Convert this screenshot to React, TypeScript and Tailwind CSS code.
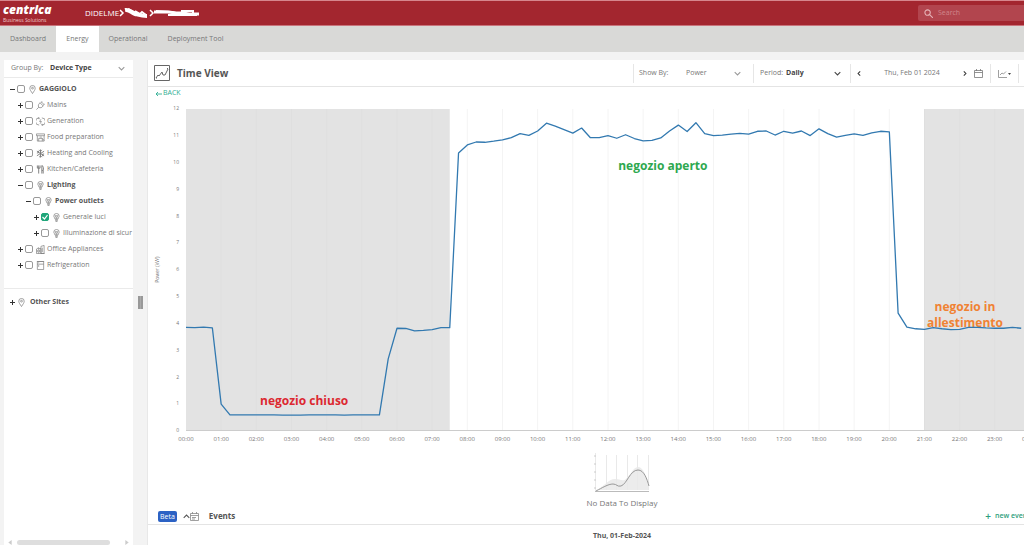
import { useState } from 'react';
import type { ReactNode } from 'react';

// kW, one reading every 15 minutes
const readings = [
  3.86, 3.85, 3.87, 3.84, 1.0, 0.6, 0.6, 0.6, 0.6, 0.6, 0.6, 0.59, 0.59, 0.59, 0.6, 0.6,
  0.6, 0.6, 0.59, 0.6, 0.6, 0.6, 0.6, 2.69, 3.83, 3.82, 3.73, 3.75, 3.78, 3.85, 3.85, 10.36,
  10.66, 10.77, 10.76, 10.8, 10.85, 10.93, 11.08, 11.02, 11.18, 11.47, 11.36, 11.23, 11.1, 11.29, 10.93, 10.93,
  11.01, 10.91, 11.04, 10.9, 10.81, 10.83, 10.92, 11.18, 11.4, 11.16, 11.49, 11.08, 11.01, 11.03, 11.06, 11.09,
  11.06, 11.17, 11.18, 11.03, 11.17, 11.1, 11.18, 11.01, 11.26, 11.08, 10.95, 11.02, 11.07, 11.02, 11.11, 11.17,
  11.15, 4.39, 3.87, 3.81, 3.79, 3.85, 3.81, 3.78, 3.79, 3.86, 3.86, 3.84, 3.83, 3.83, 3.86, 3.83,
];

const yTicks = [12, 11, 10, 9, 8, 7, 6, 5, 4, 3, 2, 1, 0];
const hours = Array.from({ length: 25 }, (_, i) => i);

type IconName = 'pin' | 'plug' | 'generation' | 'food' | 'snow' | 'kitchen' | 'bulb' | 'office' | 'fridge';

const iconShapes: Record<IconName, ReactNode> = {
  pin: (
    <>
      <path d="M10 19C7 14 4 11 4 7a6 6 0 0 1 12 0c0 4-3 7-6 12z" />
      <circle cx="10" cy="7" r="2" />
    </>
  ),
  plug: <path d="M1 19l5-5M6 14c-2-4 0-8 3-10l7 7c-3 4-6 5-10 3zM10 4l4-3M15 10l4-3M12 2l6 6" />,
  generation: (
    <>
      <path d="M7 2A8 8 0 0 0 7 18M13 2A8 8 0 0 1 13 18M4 2h3v3M16 18h-3v-3" />
      <path d="M11 5l-3 5h4l-3 5" />
    </>
  ),
  food: <path d="M1 2h18M1 2v4h18V2M3 6v12h15V6M6 18v-6h8v6M8 9h5M14 12l4 5" />,
  snow: <path strokeWidth="2" d="M10 1v18M2 5l16 10M18 5L2 15M7 2l3 3 3-3M7 18l3-3 3 3M2 9l4-1-1-4M18 11l-4 1 1 4" />,
  kitchen: <path strokeWidth="2" d="M3 1v6h6V1M6 1v18M13 19V1c4 1 4 8 3 11h-3M16 12v7" />,
  bulb: (
    <>
      <path d="M7 14c0-3-3-4-3-7a6 6 0 0 1 12 0c0 3-3 4-3 7zM7 17h6M8 19h4" />
      <path d="M7 6l2 3v5M13 6l-2 3v5M7 6h6" />
    </>
  ),
  office: <path d="M1 19V9l5-3v13M6 8h5v11M11 19V3l7-2v18zM3 11v5M8 11v5M14 6v10M1 19h18" />,
  fridge: <path d="M3 1h14v18H3zM3 7h14M6 3v2M6 9v4M2 1h16" />,
};

function Icon({ name }: { name: IconName }) {
  return (
    <svg viewBox="0 0 20 20" className="h-[9px] w-[9px] shrink-0" fill="none" stroke="#777" strokeWidth="1.5">
      {iconShapes[name]}
    </svg>
  );
}

function Chevron({ className = '', d = 'M1 3l4 4 4-4' }: { className?: string; d?: string }) {
  return (
    <svg viewBox="0 0 10 10" className={'pointer-events-none h-[7px] w-[7px] shrink-0 ' + className} fill="none" stroke="currentColor" strokeWidth="1.5">
      <path d={d} />
    </svg>
  );
}

interface Item {
  label: string;
  icon: IconName;
  level: number;
  open?: boolean;
  checked?: boolean;
}

const tree: Item[] = [
  { label: 'GAGGIOLO', icon: 'pin', level: 0, open: true },
  { label: 'Mains', icon: 'plug', level: 1 },
  { label: 'Generation', icon: 'generation', level: 1 },
  { label: 'Food preparation', icon: 'food', level: 1 },
  { label: 'Heating and Cooling', icon: 'snow', level: 1 },
  { label: 'Kitchen/Cafeteria', icon: 'kitchen', level: 1 },
  { label: 'Lighting', icon: 'bulb', level: 1, open: true },
  { label: 'Power outlets', icon: 'bulb', level: 2, open: true },
  { label: 'Generale luci', icon: 'bulb', level: 3, checked: true },
  { label: 'Illuminazione di sicur', icon: 'bulb', level: 3 },
  { label: 'Office Appliances', icon: 'office', level: 1 },
  { label: 'Refrigeration', icon: 'fridge', level: 1 },
];

const indents = ['pl-[5px]', 'pl-[13px]', 'pl-[21px]', 'pl-[29px]'];

function Toggle({ open, label }: { open?: boolean; label: string }) {
  return (
    <button type="button" aria-label={'Toggle ' + label} className="flex w-2 shrink-0 text-[#333]">
      <svg viewBox="0 0 6 6" className="ml-px h-[5px] w-[5px]" stroke="currentColor" strokeWidth="1.2">
        <path d={open ? 'M0 3h6' : 'M0 3h6M3 0v6'} />
      </svg>
    </button>
  );
}

function TreeRow({ item }: { item: Item }) {
  const [checked, setChecked] = useState(!!item.checked);

  return (
    <li className={'flex h-4 items-center ' + indents[item.level]}>
      <Toggle open={item.open} label={item.label} />
      <label className="flex items-center whitespace-nowrap">
        <span className="grid shrink-0">
          <input
            type="checkbox"
            checked={checked}
            onChange={() => setChecked(!checked)}
            className="col-start-1 row-start-1 h-2 w-2 appearance-none rounded-[2px] border border-[#999] bg-white checked:border-[#1fa67a] checked:bg-[#1fa67a]"
          />
          {checked && (
            <svg viewBox="0 0 8 8" className="pointer-events-none col-start-1 row-start-1 h-2 w-2" fill="none" stroke="#fff" strokeWidth="1.2">
              <path d="M1.500 4l2 2 3-4" />
            </svg>
          )}
        </span>
        <span className="flex w-[14px] justify-center">
          <Icon name={item.icon} />
        </span>
        <span className={item.open ? 'font-bold text-[#555]' : 'text-[#777]'}>{item.label}</span>
      </label>
    </li>
  );
}

function Sidebar() {
  return (
    <aside className="flex w-[129px] shrink-0 flex-col overflow-hidden bg-white text-[7px]">
      <div className="flex h-[18px] items-center border-b border-[#eaeaea] pr-2 pl-[7px]">
        <label htmlFor="group" className="w-[39px] text-[#777]">Group By:</label>
        <select id="group" className="min-w-0 flex-1 appearance-none font-bold text-[#444] outline-none">
          <option>Device Type</option>
        </select>
        <Chevron className="text-[#999]" />
      </div>
      <ul className="flex flex-col pt-[3px]">
        {tree.map((item) => (
          <TreeRow key={item.label} item={item} />
        ))}
      </ul>
      <div className="mt-[15px] flex h-7 items-center border-t border-[#eaeaea] pl-[5px]">
        <Toggle label="Other Sites" />
        <span className="flex w-[13px] items-center"><Icon name="pin" /></span>
        <span className="font-bold text-[#555]">Other Sites</span>
      </div>
      <div className="mt-auto flex h-[5px] items-center justify-between px-1 text-[#ccc]">
        <svg viewBox="0 0 4 6" className="h-[5px] w-1" fill="currentColor"><path d="M4 0v6L0 3z" /></svg>
        <div className="mr-[15px] ml-[5px] h-[5px] flex-1 rounded-full bg-[#dedede]" />
        <svg viewBox="0 0 4 6" className="h-[5px] w-1" fill="currentColor"><path d="M0 0v6l4-3z" /></svg>
      </div>
    </aside>
  );
}

function Header() {
  return (
    <header className="flex h-[26px] shrink-0 items-center border-t border-b border-t-[#d6868d] border-b-[#c9747c] bg-[#a3262f] text-white">
      <div className="w-[85px] pl-[3px]">
        <div className="text-[12px] leading-[14px] font-extrabold italic">centrica</div>
        <div className="text-[5px] leading-[7px] whitespace-nowrap text-[#f0c8cb]">Business Solutions</div>
      </div>
      <nav aria-label="Site" className="flex items-center text-[8px]">
        <a href="#didelme" className="w-[33px]">DIDELME</a>
        <svg viewBox="0 0 82 14" className="h-[14px] w-[82px]" fill="none" stroke="#fff">
          <path strokeWidth="1.5" d="M2 4l3 3-3 3M32 4l3 3-3 3" />
          <path strokeWidth="4" strokeLinejoin="round" d="M7 4c5-1 6 3 10 4s7 2 12 2" />
          <path strokeWidth="2" d="M10 3l8 4M17 5l5 3 2-2 4 3" />
          <path strokeWidth="3" d="M36 6h14l8 1h7l6 1h10" />
          <path strokeWidth="2" d="M38 5l16 1 8 2h18M63 5h12v4M50 9h29" />
        </svg>
      </nav>
      <label className="ml-auto flex h-4 w-[106px] items-center gap-[5px] rounded-l-[2px] bg-[#b2454e] pl-[6px]">
        <svg viewBox="0 0 10 10" className="h-[9px] w-[9px] shrink-0" fill="none" stroke="#e6b3b7" strokeWidth="1.2">
          <circle cx="4" cy="4" r="3" />
          <path d="M6 6l4 4" />
        </svg>
        <input type="search" aria-label="Search" placeholder="Search" className="w-full min-w-0 text-[7px] outline-none placeholder:text-[#d0868c]" />
      </label>
    </header>
  );
}

function Tabs() {
  return (
    <nav aria-label="Sections" className="flex h-[26px] shrink-0 bg-[#d9d9d7] text-[7px] text-[#777]">
      <a href="#dashboard" className="flex w-14 items-center justify-center">Dashboard</a>
      <a href="#energy" className="flex w-[43px] items-center justify-center bg-white">Energy</a>
      <a href="#operational" className="flex w-[58px] items-center justify-center">Operational</a>
      <a href="#deployment" className="flex w-[77px] items-center justify-center">Deployment Tool</a>
    </nav>
  );
}

function Toolbar() {
  return (
    <div className="flex h-[27px] shrink-0 items-center border-b border-[#e4e4e4] pl-[6px] text-[7px] text-[#777]">
      <svg viewBox="0 0 16 16" className="h-4 w-4" fill="none" stroke="#666">
        <path d="M.5.5h15v15H.5z" />
        <path d="M2 13l2-3 1 1 3-4 1 3 2 0 3-6M2 13h1M13 3l1 1" />
      </svg>
      <h1 className="ml-[7px] text-[10px] font-bold text-[#555]">Time View</h1>
      <div className="ml-auto flex h-[19px] w-[120px] items-center border-l border-[#e6e6e6] pr-3 pl-[5px]">
        <label htmlFor="show" className="w-[47px]">Show By:</label>
        <select id="show" className="min-w-0 flex-1 appearance-none outline-none">
          <option>Power</option>
        </select>
        <Chevron className="text-[#999]" />
      </div>
      <div className="flex h-[19px] w-[97px] items-center border-l border-[#e6e6e6] pr-[9px] pl-[6px]">
        <label htmlFor="period" className="w-[26px]">Period:</label>
        <select id="period" className="min-w-0 flex-1 appearance-none font-bold text-[#444] outline-none">
          <option>Daily</option>
        </select>
        <Chevron className="text-[#444]" />
      </div>
      <div className="flex h-[19px] w-[140px] items-center border-l border-[#e6e6e6] pr-[7px] pl-[5px]">
        <button type="button" aria-label="Previous day"><Chevron className="text-[#333]" d="M6 2L3 5l3 3" /></button>
        <span className="flex-1 text-center">Thu, Feb 01 2024</span>
        <button type="button" aria-label="Next day"><Chevron className="text-[#333]" d="M4 2l3 3-3 3" /></button>
        <button type="button" aria-label="Pick a date" className="ml-[6px]">
          <svg viewBox="0 0 9 9" className="h-[9px] w-[9px]" fill="none" stroke="#777" strokeWidth=".8">
            <path d="M.5 1.500h8v7h-8zM.5 3.500h8M2.500 0v2M6.500 0v2" />
          </svg>
        </button>
      </div>
      <div className="flex h-[19px] w-[34px] items-center border-l border-[#e6e6e6] pl-[7px]">
        <button type="button" aria-label="Chart type" className="flex items-center">
          <svg viewBox="0 0 14 9" className="h-[9px] w-[14px]" fill="none" stroke="#888" strokeWidth=".8">
            <path d="M.5 1v7.500H9M2 6l2-2 1.500 1L8 2.500" />
            <path d="M10 4h3l-1.500 2z" fill="#444" stroke="none" />
          </svg>
        </button>
        <span className="ml-[6px] h-[19px] border-l border-[#e6e6e6]" />
      </div>
    </div>
  );
}

const noteClass = 'absolute -translate-x-1/2 text-center text-[12px] leading-4 font-bold whitespace-nowrap ';

function PowerChart() {
  const points = readings.map((kw, i) => `${i},${12 - kw}`).join(' ');

  return (
    <div className="flex text-[6px] text-[#777]">
      <div className="flex h-[322px] w-5 items-center justify-center">
        <span className="-rotate-90 text-[5px] whitespace-nowrap">Power (kW)</span>
      </div>
      <div className="flex h-[322px] w-[11px] flex-col justify-between text-[5px]">
        {yTicks.map((t) => (
          <span key={t} className="flex h-0 items-center justify-end">{t}</span>
        ))}
      </div>
      {/* the last hour runs under the right edge */}
      <div className="relative -mr-[6px] ml-[7px] min-w-0 flex-1">
        <svg viewBox="0 0 96 12" preserveAspectRatio="none" className="block h-[322px] w-full border-b border-[#ccc]">
          <rect x="0" y="0" width="30" height="12" fill="#e3e3e3" />
          <rect x="84" y="0" width="12" height="12" fill="#e3e3e3" />
          {hours.slice(1).map((h) => (
            <line key={h} x1={h * 4} x2={h * 4} y1="0" y2="12" stroke={h < 8 || h > 20 ? '#dfdfdf' : '#f4f4f4'} vectorEffect="non-scaling-stroke" />
          ))}
        </svg>
        <p className={noteClass + 'top-[284px] left-[14%] text-[#dc2830]'}>negozio chiuso</p>
        <p className={noteClass + 'top-[49px] left-[56.5%] text-[#2ea84f]'}>negozio aperto</p>
        <p className={noteClass + 'top-[190px] left-[92.3%] text-[#f08233]'}>
          negozio in<br />allestimento
        </p>
        <svg viewBox="0 0 96 12" preserveAspectRatio="none" className="absolute top-0 left-0 h-[322px] w-full">
          <polyline points={points} fill="none" stroke="#3279b0" strokeWidth="1.3" strokeLinejoin="round" vectorEffect="non-scaling-stroke" />
        </svg>
        <div className="flex h-4 justify-between">
          {hours.map((h) => (
            <span key={h} className="flex w-0 items-center justify-center">{String(h % 24).padStart(2, '0')}:00</span>
          ))}
        </div>
      </div>
    </div>
  );
}

function NoData() {
  return (
    <div className="mt-[6px] flex flex-col items-center pl-[72px]">
      <svg viewBox="0 0 56 40" className="h-10 w-14" fill="none">
        <path d="M2 37c8-3 12-11 19-11s7 3 11 0S39 14 44 14s8 8 11 19v4z" fill="#ececec" />
        <path d="M1.500 0v38M12.500 2v35M22.500 2v35M33.500 2v35M43.500 2v35M54.500 2v35" stroke="#e9e9e9" />
        <path d="M0 3h2M0 11h2M0 19h2M0 27h2M0 35h2" stroke="#ccc" />
        <path d="M1 38.500h54" stroke="#bbb" />
        <path d="M2 38c6-3 12-7 17-7 4 0 4 3 8 2 6-2 9-16 17-16 6 0 9 9 11 16" stroke="#999" />
      </svg>
      <p className="mt-1 text-[8px] leading-3 text-[#777]">No Data To Display</p>
    </div>
  );
}

export default function App() {
  return (
    <div className="flex h-screen flex-col overflow-hidden bg-[#f3f3f3] font-['Open_Sans','Noto_Sans',sans-serif]">
      <Header />
      <Tabs />
      <div className="flex min-h-0 flex-1 pt-2 pl-1">
        <Sidebar />
        <div className="flex w-[14px] shrink-0 items-center justify-center">
          <div className="h-[13px] w-[5px] border-x-2 border-[#999] bg-[#aaa]" />
        </div>
        <main className="flex min-w-0 flex-1 flex-col overflow-hidden border-l border-[#e8e8e8] bg-white">
          <Toolbar />
          <a href="#back" className="mb-[9px] flex h-[13px] items-center gap-px self-start pl-[7px] text-[7px] text-[#2fae93]">
            <svg viewBox="0 0 7 6" className="h-[6px] w-[7px]" fill="none" stroke="currentColor" strokeWidth=".9">
              <path d="M7 3H1M3 1L1 3l2 2" />
            </svg>
            BACK
          </a>
          <PowerChart />
          <NoData />
          <section className="flex flex-1 flex-col">
            <div className="flex h-4 items-center border-b border-[#e4e4e4] pb-px pl-[10px]">
              <span className="rounded-[2px] bg-[#2c62c4] px-[2px] text-[7px] leading-[11px] text-white">Beta</span>
              <button type="button" aria-label="Collapse events" className="ml-[6px] text-[#555]"><Chevron d="M1 7l4-4 4 4" /></button>
              <svg viewBox="0 0 9 9" className="h-[9px] w-[9px]" fill="none" stroke="#888" strokeWidth=".8">
                <path d="M.5 1.500h8v7h-8zM.5 3.500h8M2.500 0v2M6.500 0v2M2 5.500h4M2 7h3" />
              </svg>
              <h2 className="ml-[10px] text-[8px] font-bold text-[#555]">Events</h2>
              <button type="button" className="mr-[-6px] ml-auto flex items-center gap-1 text-[7px] font-semibold whitespace-nowrap text-[#2e9e7c]">
                <span className="text-[10px] leading-3">+</span> new event
              </button>
            </div>
            <p className="pt-[5px] pl-[72px] text-center text-[7px] leading-3 font-bold text-[#555]">Thu, 01-Feb-2024</p>
          </section>
        </main>
      </div>
    </div>
  );
}
